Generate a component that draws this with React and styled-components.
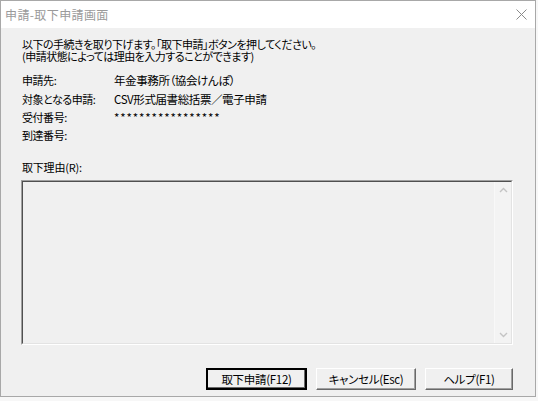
import React from "react";
import styled, { createGlobalStyle } from "styled-components";

const Global = createGlobalStyle`
  html, body { margin: 0; padding: 0; background: #f7f7f7; }
  body { font-family: "Noto Sans CJK JP", "Noto Sans", sans-serif; }
`;

const Window = styled.div`
  width: 534px;
  height: 395px;
  border: 1px solid #a8a8a8;
  display: flex;
  flex-direction: column;
  background: #f0f0f0;
  box-sizing: content-box;
`;

const TitleBar = styled.div`
  height: 27px;
  background: #ffffff;
  display: flex;
  align-items: center;
  justify-content: space-between;
  padding: 0 8px 0 4px;
  font-size: 12px;
  color: #9a9a9a;
`;

const Title = styled.span`
  font-feature-settings: "palt";
  letter-spacing: 0.4px;
`;

const Body = styled.div`
  flex: 1;
  display: flex;
  flex-direction: column;
  padding: 10px 22px 0 21px;
  color: #000;
  font-feature-settings: "palt";
`;

const Message = styled.div`
  font-size: 11px;
  line-height: 12px;
  letter-spacing: -0.5px;
`;

const InfoGrid = styled.div`
  display: grid;
  grid-template-columns: 92px 1fr;
  grid-template-rows: 18px 19px 18px 18px;
  align-items: center;
  margin-top: 9px;
`;

const Label = styled.span`
  font-size: 11px;
  letter-spacing: -0.45px;
`;

const Value = styled.span`
  font-size: 11.5px;
  letter-spacing: ${(p) => (p.$mask ? "0.9px" : "-0.4px")};
`;

const ReasonLabel = styled.div`
  margin-top: 17px;
  font-size: 11px;
  line-height: 12px;
  letter-spacing: -0.2px;
`;

const TextBox = styled.div`
  margin: 7px 0 0 -1px;
  height: 165px;
  box-sizing: border-box;
  border-top: 1px solid #a0a0a0;
  border-left: 1px solid #a0a0a0;
  border-right: 1px solid #ffffff;
  border-bottom: 1px solid #ffffff;
  display: flex;
`;

const TextInner = styled.div`
  flex: 1;
  display: flex;
  border-top: 1px solid #505050;
  border-left: 1px solid #505050;
  border-right: 1px solid #e3e3e3;
  border-bottom: 1px solid #e3e3e3;
`;

const TextArea = styled.div`
  flex: 1;
  background: #f0f0f0;
`;

const ScrollBar = styled.div`
  width: 16px;
  display: flex;
  flex-direction: column;
  justify-content: space-between;
  align-items: center;
  background: #f3f3f3;
  border-left: 1px solid #f8f8f8;
`;

const Arrow = styled.div`
  height: 16px;
  width: 16px;
  display: flex;
  align-items: center;
  justify-content: center;
`;

const Buttons = styled.div`
  margin-top: 23px;
  display: flex;
  justify-content: flex-end;
  gap: 9px;
`;

const Button = styled.div`
  width: ${(p) => p.$w}px;
  height: 22px;
  box-sizing: border-box;
  display: flex;
  align-items: center;
  justify-content: center;
  font-size: 11.5px;
  letter-spacing: -0.3px;
  background: #f0f0f0;
  border: ${(p) => (p.$default ? "2px solid #000" : "1px solid")};
  border-color: ${(p) =>
    p.$default ? "#000" : "#ffffff #696969 #696969 #ffffff"};
  box-shadow: ${(p) =>
    p.$default ? "inset -1px -1px 0 #696969" : "inset -1px -1px 0 #a0a0a0"};
`;

const Chevron = ({ up }) => (
  <svg width="9" height="6" viewBox="0 0 9 6">
    <path
      d={up ? "M1 5 L4.5 1.5 L8 5" : "M1 1 L4.5 4.5 L8 1"}
      fill="none"
      stroke="#c4c4c4"
      strokeWidth="1.4"
    />
  </svg>
);

export default function App() {
  return (
    <>
      <Global />
      <Window>
        <TitleBar>
          <Title>申請-取下申請画面</Title>
          <svg width="11" height="11" viewBox="0 0 11 11">
            <path d="M0.5 0.5 L10.5 10.5 M10.5 0.5 L0.5 10.5" stroke="#8a8a8a" strokeWidth="1" />
          </svg>
        </TitleBar>
        <Body>
          <Message>
            以下の手続きを取り下げます。「取下申請」ボタンを押してください。
            <br />
            (申請状態によっては理由を入力することができます)
          </Message>
          <InfoGrid>
            <Label>申請先:</Label>
            <Value>年金事務所（協会けんぽ）</Value>
            <Label>対象となる申請:</Label>
            <Value>CSV形式届書総括票／電子申請</Value>
            <Label>受付番号:</Label>
            <Value $mask>*****************</Value>
            <Label>到達番号:</Label>
            <Value></Value>
          </InfoGrid>
          <ReasonLabel>取下理由(R):</ReasonLabel>
          <TextBox>
            <TextInner>
              <TextArea />
              <ScrollBar>
                <Arrow>
                  <Chevron up />
                </Arrow>
                <Arrow>
                  <Chevron />
                </Arrow>
              </ScrollBar>
            </TextInner>
          </TextBox>
          <Buttons>
            <Button $w={101} $default>取下申請(F12)</Button>
            <Button $w={100}>キャンセル(Esc)</Button>
            <Button $w={88}>ヘルプ(F1)</Button>
          </Buttons>
        </Body>
      </Window>
    </>
  );
}
